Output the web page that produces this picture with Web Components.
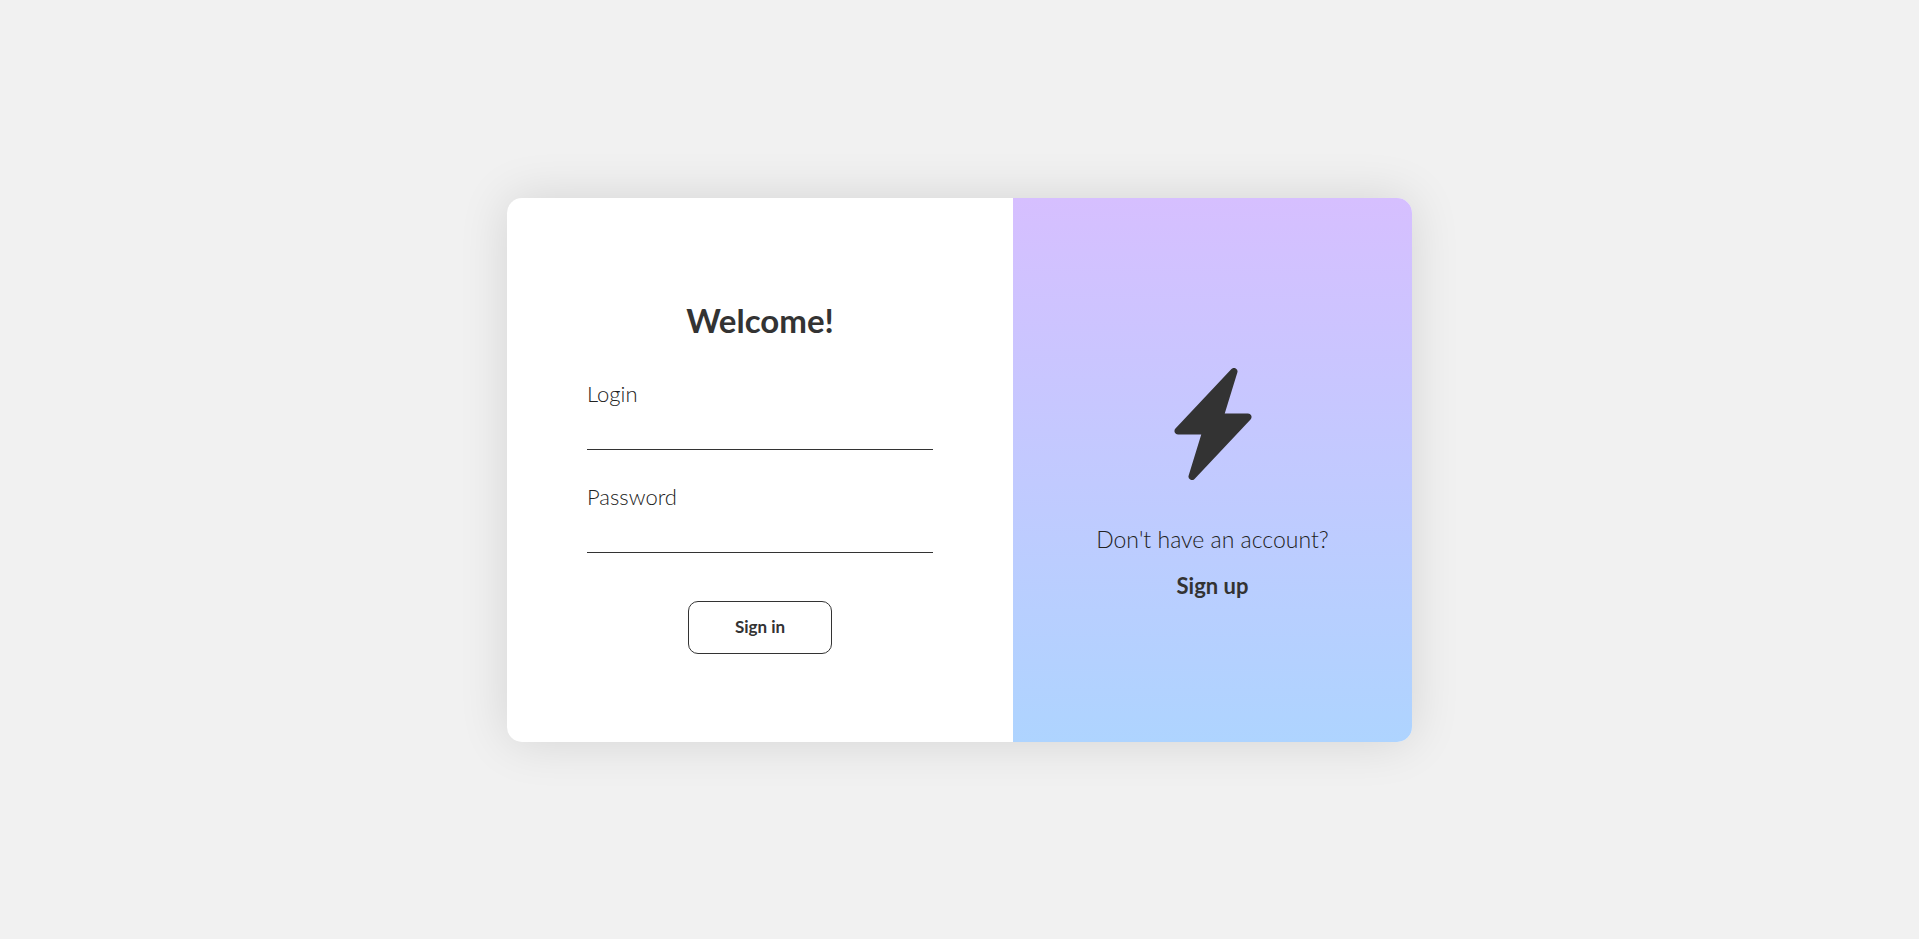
<!DOCTYPE html>
<html lang="en">
<head>
<meta charset="utf-8">
<meta name="viewport" content="width=device-width, initial-scale=1">
<title>Sign in</title>
<style>
  body { margin: 0; background: #f1f1f1; color: #333; font-family: "Century Gothic", Lato, sans-serif; font-weight: 300; }
</style>
</head>
<body>
<login-page>
  <auth-card>
    <login-form slot="main">
      <span slot="title">Welcome!</span>
      <text-field name="login" label="Login" type="text"></text-field>
      <text-field name="password" label="Password" type="password"></text-field>
      <span slot="action">Sign in</span>
    </login-form>
    <signup-panel slot="aside" href="#signup">
      <bolt-icon slot="icon"></bolt-icon>
      <span>Don't have an account?</span>
      <span slot="link">Sign up</span>
    </signup-panel>
  </auth-card>
</login-page>
<script>
  const define = (name, html, setup) => customElements.define(name, class extends HTMLElement {
    constructor() {
      super();
      this.attachShadow({ mode: 'open' }).innerHTML = html;
    }
    connectedCallback() {
      if (setup) setup(this, this.shadowRoot);
    }
  });

  define('login-page', `
    <style>
      :host { display: grid; box-sizing: border-box; min-height: 100vh; place-items: center; padding: 24px; }
      main { width: min(905px, 100%); }
    </style>
    <main><slot></slot></main>`);

  define('auth-card', `
    <style>
      :host { display: grid; grid-template-columns: 506fr 399fr; overflow: hidden; border-radius: 15px; background: #fff; box-shadow: 0 0 50px rgba(0, 0, 0, .12); }
      @media (max-width: 720px) { :host { grid-template-columns: 1fr; } }
    </style>
    <slot name="main"></slot><slot name="aside"></slot>`);

  define('login-form', `
    <style>
      :host { display: block; padding: 102px 80px 88px; }
      form { display: flex; flex-direction: column; }
      h1 { margin: 0 0 40px; font-size: 33px; line-height: 40px; font-weight: 700; text-align: center; }
      .fields { display: grid; gap: 33px; margin-bottom: 48px; }
      button { align-self: center; padding: 14px 46px 16px; border: 1px solid #333; border-radius: 10px; background: #fff; color: inherit; font: 700 17px/21px "Century Gothic", Lato, sans-serif; cursor: pointer; }
    </style>
    <form>
      <h1><slot name="title"></slot></h1>
      <div class="fields"><slot></slot></div>
      <button type="button"><slot name="action"></slot></button>
    </form>`);

  define('text-field', `
    <style>
      :host { display: flex; flex-direction: column; }
      label { color: #222; font-size: 22px; line-height: 28px; }
      input { box-sizing: border-box; width: 100%; height: 42px; padding: 0; border: 0; border-bottom: 1px solid #333; border-radius: 0; background: transparent; color: inherit; font: inherit; font-size: 22px; outline: none; }
    </style>
    <label for="control"></label>
    <input id="control">`, (host, root) => {
      root.querySelector('label').textContent = host.getAttribute('label');
      const input = root.querySelector('input');
      input.type = host.getAttribute('type');
      input.name = host.getAttribute('name');
    });

  define('signup-panel', `
    <style>
      :host { display: flex; flex-direction: column; align-items: center; justify-content: center; padding: 29px 24px 0; background: linear-gradient(#d6bfff, #aed4ff); text-align: center; }
      p { margin: 45px 0 19px; color: #222; font-size: 23px; line-height: 28px; }
      a { color: inherit; font-size: 22px; line-height: 28px; font-weight: 700; text-decoration: none; }
    </style>
    <slot name="icon"></slot>
    <p><slot></slot></p>
    <a><slot name="link"></slot></a>`, (host, root) => {
      root.querySelector('a').href = host.getAttribute('href');
    });

  define('bolt-icon', `
    <style>
      :host { display: block; width: 112px; height: 112px; }
      svg { display: block; width: 100%; height: 100%; }
    </style>
    <svg viewBox="0 0 16 16" fill="currentColor" aria-hidden="true"><path d="M11.251.068a.5.5 0 0 1 .227.58L9.677 6.5H13a.5.5 0 0 1 .364.843l-8 8.5a.5.5 0 0 1-.842-.49L6.323 9.5H3a.5.5 0 0 1-.364-.843l8-8.5a.5.5 0 0 1 .615-.09z"/></svg>`);
</script>
</body>
</html>
